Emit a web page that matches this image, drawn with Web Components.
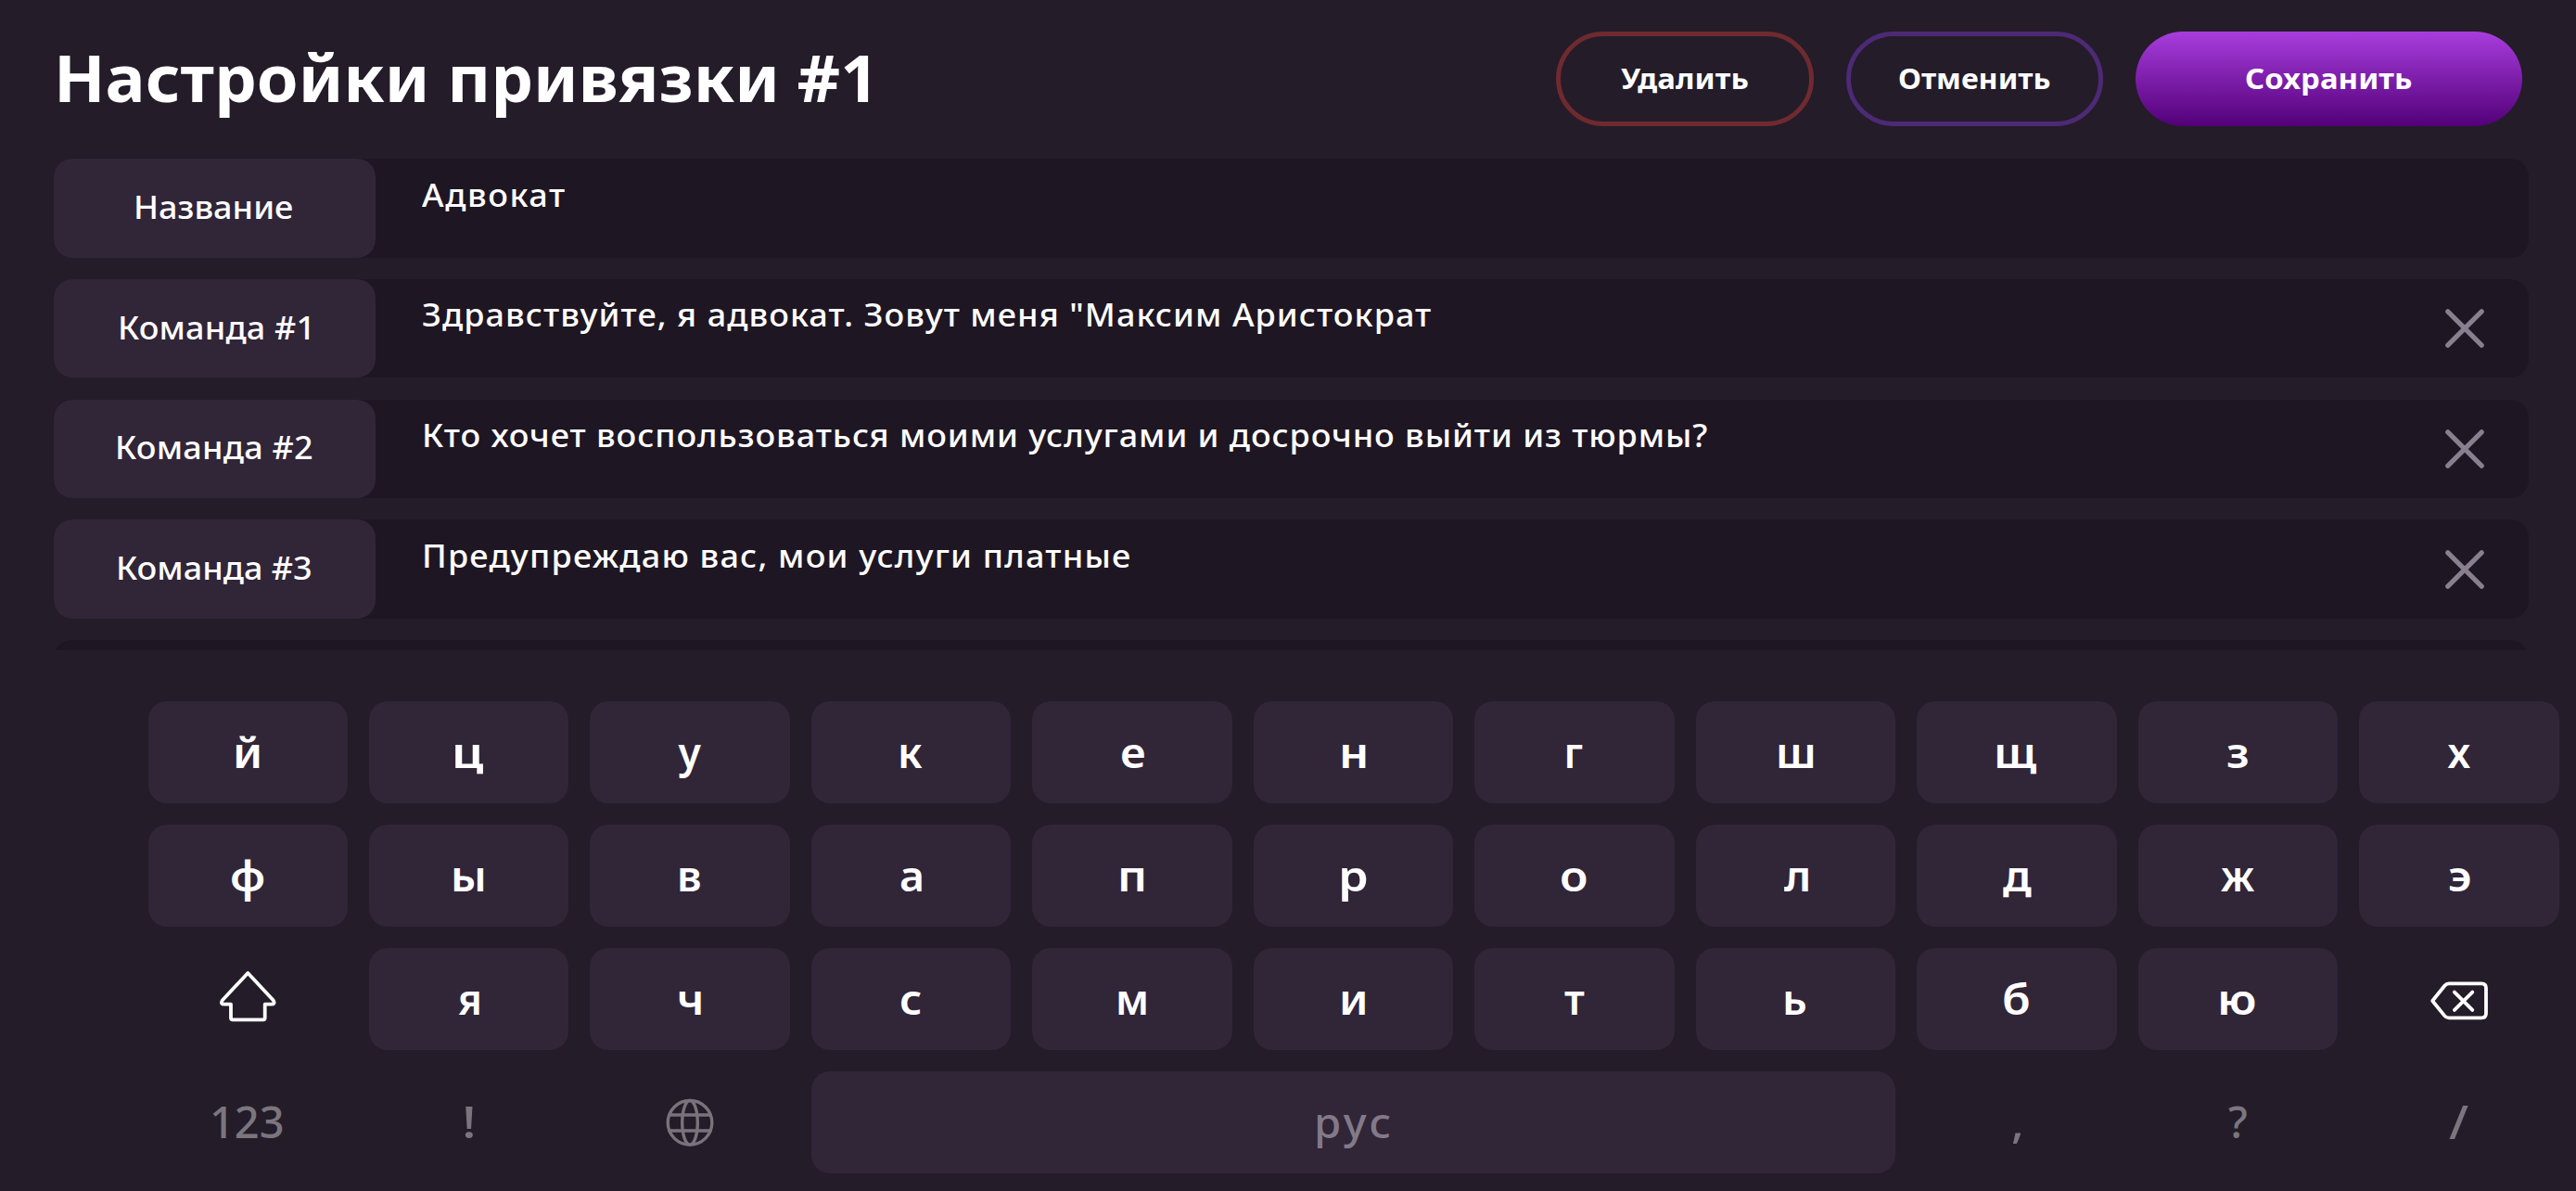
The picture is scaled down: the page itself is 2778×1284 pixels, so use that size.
<!DOCTYPE html>
<html lang="ru">
<head>
<meta charset="utf-8">
<title>Настройки привязки</title>
<style>
html,body{margin:0;height:100%;background:#241c29;overflow:hidden}
body{font-family:"Noto Sans","Open Sans",sans-serif;color:#fff}
</style>
</head>
<body>
<bind-app></bind-app>
<script>
// Text whose visible ink takes a given width: words are slightly widened and tracked, single glyphs are stretched.
class FitText extends HTMLElement{
  connectedCallback(){
    const r=this.attachShadow({mode:'open'});
    r.innerHTML=`<style>:host{display:flex;flex:none}span{display:block;flex:none;white-space:pre;transform-origin:0 50%}</style><span></span>`;
    const s=r.querySelector('span'),t=this.getAttribute('text'),w=+this.getAttribute('w');
    s.textContent=t;
    const cs=getComputedStyle(this),c=document.createElement('canvas').getContext('2d');
    c.font=`${cs.fontWeight} ${cs.fontSize} "Noto Sans"`;
    const m=c.measureText(t),ink=m.actualBoundingBoxRight+m.actualBoundingBoxLeft;
    this.style.width=w+'px';
    let k=w/ink;
    if(t.length>1){k=Math.min(k,1.06);s.style.letterSpacing=(w/k-ink)/(t.length-1)+'px'}
    s.style.transform=`scaleX(${k})`;
    s.style.marginLeft=m.actualBoundingBoxLeft*k+'px';
  }
}
customElements.define('fit-text',FitText);

class PillButton extends HTMLElement{
  connectedCallback(){
    this.attachShadow({mode:'open'}).innerHTML=`<style>
    :host{display:flex;box-sizing:border-box;width:277.5px;height:102px;border-radius:51px;align-items:center;justify-content:center;padding-bottom:2px;font-weight:700;font-size:31px;line-height:40px}
    :host([kind=danger]){border:5px solid #6f2a30}
    :host([kind=plain]){border:5px solid #4c2a75}
    :host([kind=primary]){width:417px;background:linear-gradient(#a83ddd,#520078)}
    </style><slot></slot>`;
  }
}
customElements.define('pill-button',PillButton);

class CommandRow extends HTMLElement{
  connectedCallback(){
    const a=n=>this.getAttribute(n);
    this.attachShadow({mode:'open'}).innerHTML=`<style>
    :host{display:flex;flex:none;height:106.5px;border-radius:20px;background:#1e1623;font-size:34px;font-weight:540;line-height:48px}
    .label{flex:none;width:347px;box-sizing:border-box;padding-bottom:3px;border-radius:20px;background:#312538;display:flex;align-items:center;justify-content:center}
    .value{flex:1;padding:14.6px 0 0 var(--inset,50px)}
    svg{flex:none;align-self:center;width:42px;height:42px;margin-right:48px}
    </style>`+(a('label')?`<div class="label"><fit-text text="${a('label')}" w="${a('lw')}"></fit-text></div>
    <div class="value"><fit-text text="${a('value').replace(/"/g,'&quot;')}" w="${a('vw')}"></fit-text></div>`:'')+
    (this.hasAttribute('removable')?`<svg viewBox="0 0 42 42"><path d="M2.8 2.8 39.2 39.2M39.2 2.8 2.8 39.2" stroke="#897f91" stroke-width="5.2" stroke-linecap="round"/></svg>`:'');
  }
}
customElements.define('command-row',CommandRow);

const icons={
  shift:`<svg width="114" height="94.6" viewBox="0 0 114 94.6"><path d="M57.3 19 84.6 48.2q2.8 4.5-2.2 4.5h-6.7v14.6q0 2-2 2H41q-2 0-2-2V52.7h-6.9q-5 0-2.2-4.5Z"/></svg>`,
  back:`<svg width="104" height="74.6" viewBox="0 0 104 74.6"><path d="M23.2 39 36.3 22.7q1.9-2.3 4.7-2.3H76.2q4.8 0 4.8 4.8V52.6q0 4.8-4.8 4.8H41q-2.8 0-4.7-2.3ZM46.9 29.6 66.3 48.9M66.3 29.6 46.9 48.9"/></svg>`,
  globe:`<svg width="88" height="80.6" viewBox="0 0 88 80.6"><g stroke-width="3.4"><circle cx="44" cy="40.3" r="23.8"/><ellipse cx="44" cy="40.3" rx="8.3" ry="23.8"/><path d="M21.8 32H66.2M21.8 49H66.2"/></g></svg>`
};
class KeyCap extends HTMLElement{
  connectedCallback(){
    const i=this.getAttribute('icon');
    this.attachShadow({mode:'open'}).innerHTML=`<style>
    :host{display:flex;flex:none;box-sizing:border-box;width:215.3px;height:110px;border-radius:20px;background:#312538;align-items:center;justify-content:center;font-size:44.5px;font-weight:560;line-height:60px}
    :host([bare]){background:none}
    :host([dim]){color:#7b767e;font-size:47.5px;font-weight:530;padding-bottom:3px}
    :host([icon]){padding:0}
    :host([space]){width:1169.3px;font-size:44.5px;color:#827a88;padding-bottom:1px}
    :host([text="/"]){font-size:51px;padding-bottom:4px}
    svg{display:block;fill:none;stroke:currentColor;stroke-width:3.8;stroke-linejoin:round;stroke-linecap:round}
    :host([icon=globe]){color:#7b737b}
    </style>`+(i?icons[i]:`<fit-text text="${this.getAttribute('text')}" w="${this.getAttribute('w')}"></fit-text>`);
  }
}
customElements.define('key-cap',KeyCap);

class KeyBoard extends HTMLElement{
  connectedCallback(){
    const keys=s=>s.split(' ').map(k=>{const[c,w]=k.split(':');return`<key-cap text="${c}" w="${w}"></key-cap>`}).join('');
    this.attachShadow({mode:'open'}).innerHTML=`<style>
    :host{display:flex;flex-direction:column;gap:23.1px;padding-left:159.5px}
    div{display:flex;gap:23.2px}
    </style>
    <div>${keys('й:25.5 ц:30.5 у:25 к:23.5 е:25 н:25 г:17 ш:37 щ:43.5 з:22 х:25')}</div>
    <div>${keys('ф:34 ы:32 в:22.5 а:23 п:25 р:27 о:27 л:26 д:31 ж:36.5 э:22.5')}</div>
    <div><key-cap bare icon="shift"></key-cap>${keys('я:22.5 ч:23.5 с:22.5 м:30 и:25 т:22 ь:22 б:27 ю:38')}<key-cap bare icon="back"></key-cap></div>
    <div><key-cap bare dim text="123" w="75.5"></key-cap><key-cap bare dim text="!" w="8.5"></key-cap><key-cap bare dim icon="globe"></key-cap><key-cap dim space text="рус" w="78.5"></key-cap><key-cap bare dim text="," w="9.5"></key-cap><key-cap bare dim text="?" w="20.5"></key-cap><key-cap bare dim text="/" w="21.5"></key-cap></div>`;
  }
}
customElements.define('key-board',KeyBoard);

class BindApp extends HTMLElement{
  connectedCallback(){
    this.attachShadow({mode:'open'}).innerHTML=`<style>
    :host{display:flex;flex-direction:column;box-sizing:border-box;width:2778px;height:1284px;padding-top:34.4px}
    header{display:flex;flex:none;height:102px;align-items:center;justify-content:space-between;padding:0 58px 0 64px}
    h1{margin:0;padding-bottom:5px;font-size:70px;font-weight:720;line-height:90px}
    nav{display:flex;gap:35px}
    main{display:flex;flex:none;flex-direction:column;gap:23.2px;height:529.5px;margin:34.8px 51.4px 55.3px 58px;overflow:hidden}
    </style>
    <header><h1><fit-text text="Настройки привязки #1" w="872"></fit-text></h1>
    <nav><pill-button kind="danger"><fit-text text="Удалить" w="137.5"></fit-text></pill-button><pill-button kind="plain"><fit-text text="Отменить" w="163"></fit-text></pill-button><pill-button kind="primary"><fit-text text="Сохранить" w="179"></fit-text></pill-button></nav></header>
    <main>
    <command-row label="Название" lw="168" value="Адвокат" vw="154"></command-row>
    <command-row removable label="Команда #1" lw="203" style="--inset:51px" value="Здравствуйте, я адвокат. Зовут меня &quot;Максим Аристократ" vw="1087"></command-row>
    <command-row removable label="Команда #2" lw="209" style="--inset:53px" value="Кто хочет воспользоваться моими услугами и досрочно выйти из тюрмы?" vw="1383"></command-row>
    <command-row removable label="Команда #3" lw="207" style="--inset:53px" value="Предупреждаю вас, мои услуги платные" vw="760"></command-row>
    <command-row></command-row>
    </main>
    <key-board></key-board>`;
  }
}
customElements.define('bind-app',BindApp);
</script>
</body>
</html>
